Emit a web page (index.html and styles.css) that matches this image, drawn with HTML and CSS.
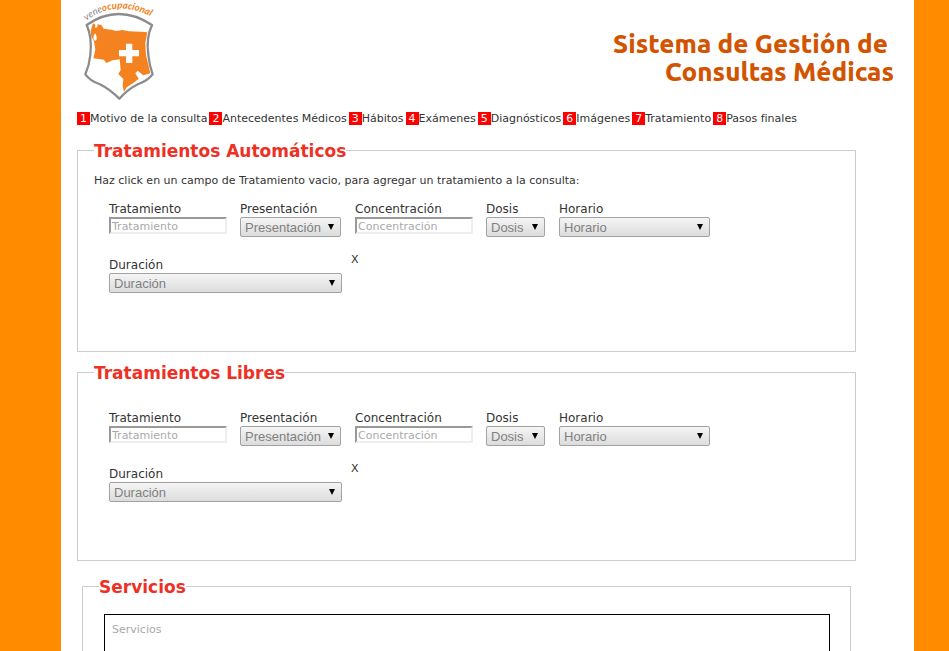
FILE: index.html
```html
<!DOCTYPE html>
<html lang="es">
<head>
<meta charset="utf-8">
<title>Sistema de Gestión de Consultas Médicas</title>
<link rel="stylesheet" href="styles.css">
</head>
<body>
<div class="page">
  <header class="header">
    <svg class="logo" viewBox="21 0 240 306" role="img" aria-label="veneocupacional">
      <defs><path id="arc" d="M49 62 Q148 -12 268 64"/></defs>
      <text class="logo-text"><textPath href="#arc">vene<tspan class="logo-strong">ocupacional</tspan></textPath></text>
      <path class="logo-shield" d="M50 75 Q145 9 246 75 Q228 112 235 165 Q238 196 248 223 Q231 244 205 252 Q174 267 148 296 Q119 267 88 252 Q62 244 46 223 Q58 196 61 165 Q67 112 50 75 Z"/>
      <path class="logo-map" d="M69 70 L76 74 L75 84 L82 82 L83 73 L94 75 L101 86 L124 89 L139 93 L157 90 L177 94 L213 95 L232 97 L226 128 L228 165 L241 220 L220 226 L203 212 L196 220 L206 236 L190 249 L170 262 L162 276 L158 258 L160 237 L145 222 L152 210 L149 178 L127 181 L110 189 L101 179 L70 175 L76 150 L72 124 L64 110 L62 92 Z"/>
      <path class="logo-bay" d="M72 105 Q76 94 80 110 Q82 122 75 122 Q67 119 72 105 Z"/>
      <path class="logo-cross" d="M168 131 H187 V150 H207 V169 H187 V189 H168 V169 H147 V150 H168 Z"/>
    </svg>
    <h1 class="title"><span class="title-first">Sistema de Gestión de</span><br>Consultas Médicas</h1>
  </header>

  <nav class="steps">
    <a href="#"><b>1</b>Motivo de la consulta</a>
    <a href="#"><b>2</b>Antecedentes Médicos</a>
    <a href="#"><b>3</b>Hábitos</a>
    <a href="#"><b>4</b>Exámenes</a>
    <a href="#"><b>5</b>Diagnósticos</a>
    <a href="#"><b>6</b>Imágenes</a>
    <a href="#"><b>7</b>Tratamiento</a>
    <a href="#"><b>8</b>Pasos finales</a>
  </nav>

  <form class="form">
    <fieldset class="group">
      <legend>Tratamientos Automáticos</legend>
      <p class="hint">Haz click en un campo de Tratamiento vacio, para agregar un tratamiento a la consulta:</p>
      <div class="fields">
        <div class="field"><label for="a-trat">Tratamiento</label><input id="a-trat" type="text" placeholder="Tratamiento"></div>
        <div class="field"><label for="a-pres">Presentación</label><select id="a-pres" class="w-pres"><option>Presentación</option></select></div>
        <div class="field"><label for="a-conc">Concentración</label><input id="a-conc" type="text" placeholder="Concentración"></div>
        <div class="field"><label for="a-dosis">Dosis</label><select id="a-dosis" class="w-dosis"><option>Dosis</option></select></div>
        <div class="field"><label for="a-hor">Horario</label><select id="a-hor"><option>Horario</option></select></div>
      </div>
      <div class="duration">
        <div class="field"><label for="a-dur">Duración</label><select id="a-dur"><option>Duración</option></select></div>
        <button type="button" class="remove">X</button>
      </div>
    </fieldset>

    <fieldset class="group group-free">
      <legend>Tratamientos Libres</legend>
      <div class="fields">
        <div class="field"><label for="l-trat">Tratamiento</label><input id="l-trat" type="text" placeholder="Tratamiento"></div>
        <div class="field"><label for="l-pres">Presentación</label><select id="l-pres" class="w-pres"><option>Presentación</option></select></div>
        <div class="field"><label for="l-conc">Concentración</label><input id="l-conc" type="text" placeholder="Concentración"></div>
        <div class="field"><label for="l-dosis">Dosis</label><select id="l-dosis" class="w-dosis"><option>Dosis</option></select></div>
        <div class="field"><label for="l-hor">Horario</label><select id="l-hor"><option>Horario</option></select></div>
      </div>
      <div class="duration">
        <div class="field"><label for="l-dur">Duración</label><select id="l-dur"><option>Duración</option></select></div>
        <button type="button" class="remove">X</button>
      </div>
    </fieldset>

    <fieldset class="group services">
      <legend>Servicios</legend>
      <textarea aria-label="Servicios" placeholder="Servicios" rows="6"></textarea>
    </fieldset>
  </form>
</div>
</body>
</html>
```
FILE: styles.css
```css
* { box-sizing: border-box; }

body {
  margin: 0;
  background: #ff8c00;
  color: #333;
  font-family: "DejaVu Sans", Verdana, sans-serif;
  font-size: 11px;
  line-height: 16px;
}

/* the page scrolls without a visible bar */
html { scrollbar-width: none; }

.page {
  min-height: 100vh;
  margin: 0 35px 0 61px;
  padding: 0 16px;
  background: #fff;
}

.header {
  display: flex;
  justify-content: space-between;
  align-items: flex-start;
}

.logo { width: 80px; height: 102px; overflow: visible; }
.logo-text { font: italic 29px Lato, sans-serif; fill: #888; }
.logo-strong { fill: #f58220; font-weight: 700; }
.logo-shield { fill: #fff; stroke: #8c8c8c; stroke-width: 7; stroke-linejoin: round; }
.logo-map { fill: #f58220; }
.logo-bay, .logo-cross { fill: #fff; }

.title {
  margin: 30px 4px 0 0;
  color: #d35400;
  font-family: Ubuntu, "Noto Sans", sans-serif;
  font-size: 26px;
  font-weight: 800;
  line-height: 28px;
  text-align: right;
}
.title-first { padding-right: 6px; }

.steps {
  display: flex;
  flex-wrap: wrap;
  gap: 2px;
  margin-top: 9px;
}
.steps a { color: inherit; text-decoration: none; }
.steps b {
  padding: 0 3px;
  background: #f00;
  color: #fff;
  font-weight: 400;
}

.form { padding-right: 42px; margin-top: 12px; }

.group {
  min-width: 0;
  margin: 0 0 9px;
  padding: 0 16px 58px;
  border: 1px solid #ccc;
}

legend {
  padding: 2px 0 0;
  color: #ee3124;
  font-size: 17px;
  font-weight: 700;
  line-height: 21px;
}

.hint { margin: 11px 0 12px; }

.fields {
  display: grid;
  grid-template-columns: 118px 102px 118px 60px 151px;
  gap: 13px;
  padding-left: 15px;
}
.group-free { margin-bottom: 14px; }
.group-free .fields { margin-top: 26px; }

.field { display: flex; flex-direction: column; }
.field label { font-size: 12px; line-height: 16px; }

input {
  width: 100%;
  height: 17px;
  padding: 1px 1px 0;
  border: 2px solid;
  border-color: #999 #eee #eee #999;
  background: #fff;
  font: 11px/13px "DejaVu Sans", sans-serif;
}
::placeholder { color: #a9a9a9; opacity: 1; }

select {
  width: 100%;
  height: 20px;
  padding: 0 4px;
  border: 1px solid #a2a2a2;
  border-radius: 2px;
  appearance: none;
  background:
    url("data:image/svg+xml,%3Csvg xmlns='http://www.w3.org/2000/svg' width='6' height='6'%3E%3Cpath d='M0 0H6L3 6Z'/%3E%3C/svg%3E") no-repeat right 6px top 6px,
    linear-gradient(#f5f5f5, #dcdcdc);
  color: #808080;
  font: 13px "Liberation Sans", Arial, sans-serif;
}
.w-pres { width: 101px; }
.w-dosis { width: 59px; }

.duration {
  display: flex;
  align-items: flex-start;
  gap: 9px;
  margin-top: 14px;
  padding-left: 15px;
}
.duration .field { width: 233px; padding-top: 6px; }

.remove {
  padding: 0;
  border: 0;
  background: none;
  color: inherit;
  font: 11px/18px "DejaVu Sans", sans-serif;
}

.services { margin: 0 5px; padding: 0 16px 20px; }
.services textarea {
  display: block;
  width: calc(100% - 9px);
  margin: 16px 4px 0 5px;
  padding: 7px;
  border: 1px solid #000;
  resize: none;
  font: 11px/16px "DejaVu Sans", sans-serif;
}
```
